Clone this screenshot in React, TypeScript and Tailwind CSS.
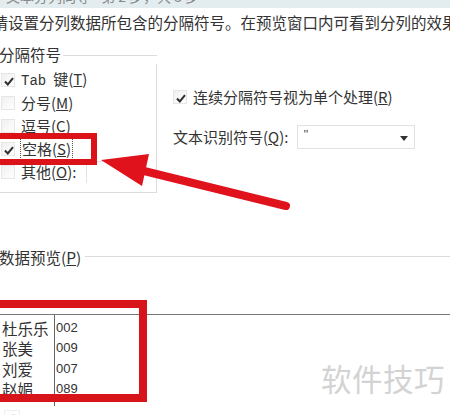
import React from "react";

const FONT = { fontFamily: '"Noto Sans CJK SC", "Noto Sans", sans-serif' };

function Check() {
  return (
    <svg width="10" height="9" viewBox="0 0 10 9" className="absolute left-[2px] top-[3px]">
      <path d="M1 4.5 L3.8 7.5 L9 1.2" fill="none" stroke="#2f2f2f" strokeWidth="2" />
    </svg>
  );
}

function Box({ checked }: { checked?: boolean }) {
  return (
    <div className="relative w-[14px] h-[14px] shrink-0 border border-[#e6e6e6] bg-gradient-to-br from-[#f0f0f0] to-white">
      {checked && <Check />}
    </div>
  );
}

const ROWS = [
  { checked: true, label: <><span className="font-['Liberation_Mono'] text-[14px] mr-[7px]">Tab</span>键(<span className="underline">T</span>)</> },
  { checked: false, label: <>分号(<span className="underline">M</span>)</> },
  { checked: false, label: <>逗号(<span className="underline">C</span>)</> },
  { checked: true, label: <span className="outline-1 outline-dotted outline-[#555] outline-offset-0 px-[1px]">空格(<span className="underline">S</span>)</span> },
  { checked: false, label: <>其他(<span className="underline">O</span>):</> },
];

const DATA = [
  ["杜乐乐", "002"],
  ["张美", "009"],
  ["刘爱", "007"],
  ["赵媚", "089"],
];

export default function App() {
  return (
    <div className="relative w-[450px] h-[415px] overflow-hidden bg-white text-[#333]" style={FONT}>
      {/* header strip, mostly cut off */}
      <div className="h-[8px] bg-[#e3edf0] overflow-hidden">
        <div className="mt-[-12px] ml-[6px] text-[14px] leading-[16px] text-[#888] whitespace-nowrap">
          文本分列向导 - 第 2 步，共 3 步
        </div>
      </div>

      <div className="mt-[4px] ml-[-7.5px] text-[15.5px] leading-[20px] whitespace-nowrap">
        请设置分列数据所包含的分隔符号。在预览窗口内可看到分列的效果
      </div>

      <div className="mt-[12px] flex">
        {/* delimiters group */}
        <div className="w-[157px] shrink-0">
          <div className="flex items-center h-[20px] ml-[-1px]">
            <span className="text-[15.5px] leading-[20px]">分隔符号</span>
            <div className="flex-1 h-px bg-[#dcdcdc] ml-[2px] mt-[2px]" />
          </div>
          <div className="border-r border-b border-[#dcdcdc] pt-[4.5px] pb-[8px]">
            {ROWS.map((r, i) => (
              <div key={i} className="h-[23px] flex items-center">
                <div className="ml-[1px]">
                  <Box checked={r.checked} />
                </div>
                <div className="ml-[6px] text-[15px] leading-[20px] whitespace-nowrap flex items-baseline">{r.label}</div>
                {i === 4 && <div className="ml-[10px] w-[56px] h-[22px] border-l border-t border-[#e2e2e2]" />}
              </div>
            ))}
          </div>
        </div>

        {/* right column */}
        <div className="ml-[16px] pt-[42px]">
          <div className="h-[22px] flex items-center">
            <Box checked />
            <span className="ml-[6px] text-[15px] leading-[20px] whitespace-nowrap">
              连续分隔符号视为单个处理(<span className="underline">R</span>)
            </span>
          </div>
          <div className="mt-[17px] h-[24px] flex items-center">
            <span className="text-[15px] leading-[20px] whitespace-nowrap">
              文本识别符号(<span className="underline">Q</span>):
            </span>
            <div className="ml-[9px] w-[118px] h-[24px] border border-[#dfe3e8] flex items-start justify-between">
              <span className="ml-[5px] mt-[1px] text-[12px] leading-[14px] font-['Liberation_Serif']">"</span>
              <svg width="8" height="5" viewBox="0 0 8 5" className="mr-[6px] mt-[10px]">
                <path d="M0 0 H8 L4 5 Z" fill="#333" />
              </svg>
            </div>
          </div>
        </div>
      </div>

      {/* preview header */}
      <div className="mt-[54px] flex items-center h-[20px]">
        <span className="ml-[-1px] text-[15.5px] leading-[20px] whitespace-nowrap">
          数据预览(<span className="underline">P</span>)
        </span>
        <div className="flex-1 h-px bg-[#dcdcdc] ml-[4px]" />
      </div>

      {/* preview box */}
      <div className="mt-[47px] border-t border-[#777] h-[92px] flex">
        <div className="w-[55px] border-r border-[#666] pt-[3px]">
          {DATA.map((d) => (
            <div key={d[0]} className="h-[20.5px] pl-[2px] text-[15.5px] leading-[20.5px] whitespace-nowrap">{d[0]}</div>
          ))}
        </div>
        <div className="pt-[3px]">
          {DATA.map((d) => (
            <div key={d[1]} className="h-[20.5px] pl-[1px] text-[13px] leading-[20.5px] font-['Liberation_Sans']">{d[1]}</div>
          ))}
        </div>
      </div>
      <div className="mt-[4px] ml-[4px] w-[16px] h-[11px] border border-[#eee] flex items-center justify-center text-[8px] leading-[8px] text-[#bbb]">◂</div>

      {/* annotations */}
      <div className="absolute left-[-10px] top-[133px] w-[107px] h-[32px] border-[6px] border-[#dc1219]" />
      <div className="absolute left-[-10px] top-[300px] w-[157px] h-[102px] border-[8px] border-[#d8141b]" />
      <svg className="absolute left-0 top-0" width="450" height="415" viewBox="0 0 450 415">
        <line x1="140" y1="170" x2="286" y2="206" stroke="#e0121b" strokeWidth="8" strokeLinecap="round" />
        <polygon points="101,160 149,154 142,186" fill="#e0121b" />
      </svg>
      <div className="absolute left-[321px] top-[360px] text-[30.5px] leading-[36px] text-[#d3d3d3] whitespace-nowrap tracking-[0.5px]">
        软件技巧
      </div>
    </div>
  );
}
